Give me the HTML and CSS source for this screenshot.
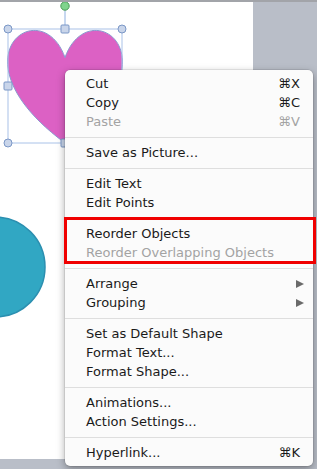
FILE: index.html
```html
<!DOCTYPE html>
<html>
<head>
<meta charset="utf-8">
<link rel="stylesheet" href="styles.css">
</head>
<body>
<div class="stage">
  <div class="topline"></div>
  <div class="slide">
    <svg class="canvas" width="253" height="457" viewBox="0 2 253 457">
      <circle cx="-5" cy="267" r="50" fill="#31a7c3" stroke="#2b8fb0" stroke-width="1.5"/>
      <line x1="65" y1="5" x2="65" y2="29" stroke="#8fb0e0" stroke-width="1"/>
      <path d="M65,57.5 C88.75,-9 181.4,57.5 65,143 C-51.4,57.5 41.25,-9 65,57.5 Z" fill="#dc61c4" stroke="#8a9ad0" stroke-width="1"/>
      <rect x="8" y="29" width="114" height="114" fill="none" stroke="#a9c2e8" stroke-width="1"/>
      <g fill="#c9d5ea" stroke="#7b97c6" stroke-width="1">
        <circle cx="8" cy="29" r="4"/>
        <circle cx="122" cy="29" r="4"/>
        <circle cx="8" cy="143" r="4"/>
        <circle cx="122" cy="143" r="4"/>
        <rect x="61" y="25" width="8" height="8" rx="1"/>
        <rect x="4" y="82" width="8" height="8" rx="1"/>
        <rect x="61" y="139" width="8" height="8" rx="1"/>
        <rect x="118" y="82" width="8" height="8" rx="1"/>
      </g>
      <circle cx="65" cy="6" r="4.2" fill="#7fd48c" stroke="#4a9d58" stroke-width="1"/>
    </svg>
  </div>

  <div class="menu">
    <div class="item"><span>Cut</span><span class="key">⌘X</span></div>
    <div class="item"><span>Copy</span><span class="key">⌘C</span></div>
    <div class="item disabled"><span>Paste</span><span class="key">⌘V</span></div>
    <div class="sep"></div>
    <div class="item"><span>Save as Picture...</span></div>
    <div class="sep"></div>
    <div class="item"><span>Edit Text</span></div>
    <div class="item"><span>Edit Points</span></div>
    <div class="sep"></div>
    <div class="item"><span>Reorder Objects</span></div>
    <div class="item disabled"><span>Reorder Overlapping Objects</span></div>
    <div class="sep"></div>
    <div class="item"><span>Arrange</span><span class="arrow"></span></div>
    <div class="item"><span>Grouping</span><span class="arrow"></span></div>
    <div class="sep"></div>
    <div class="item"><span>Set as Default Shape</span></div>
    <div class="item"><span>Format Text...</span></div>
    <div class="item"><span>Format Shape...</span></div>
    <div class="sep"></div>
    <div class="item"><span>Animations...</span></div>
    <div class="item"><span>Action Settings...</span></div>
    <div class="sep"></div>
    <div class="item"><span>Hyperlink...</span><span class="key">⌘K</span></div>
  </div>

  <div class="highlight"></div>
</div>
</body>
</html>
```

FILE: styles.css
```css
html, body {
  margin: 0;
  padding: 0;
}

body {
  font-family: "DejaVu Sans", "Liberation Sans", sans-serif;
}

.stage {
  position: relative;
  width: 317px;
  height: 469px;
  background: #b9bec8;
  overflow: hidden;
}

.topline {
  height: 2px;
  background: #a2a4a9;
}

.slide {
  width: 253px;
  height: 457px;
  background: #ffffff;
  overflow: hidden;
}

.canvas {
  display: block;
}

.menu {
  position: absolute;
  left: 65px;
  top: 70px;
  width: 248px;
  padding: 4px 0;
  background: #fbfbfb;
  border-radius: 5px;
  box-shadow: 0 3px 9px rgba(0, 0, 0, 0.35), 0 0 0 0.5px rgba(0, 0, 0, 0.15);
  font-size: 13px;
  color: #1a1a1a;
}

.item {
  display: flex;
  justify-content: space-between;
  align-items: center;
  height: 19px;
  line-height: 19px;
  padding: 0 13px 0 21px;
}

.item.disabled {
  color: #a3a3a3;
}

.arrow {
  width: 0;
  height: 0;
  border-top: 4.5px solid transparent;
  border-bottom: 4.5px solid transparent;
  border-left: 8px solid #6a6a6a;
  margin-right: -4px;
}

.sep {
  height: 1px;
  margin: 6px 0 5px;
  background: #dedede;
}

.highlight {
  position: absolute;
  left: 64px;
  top: 217px;
  width: 246px;
  height: 41px;
  border: 3px solid #f00000;
}
```
